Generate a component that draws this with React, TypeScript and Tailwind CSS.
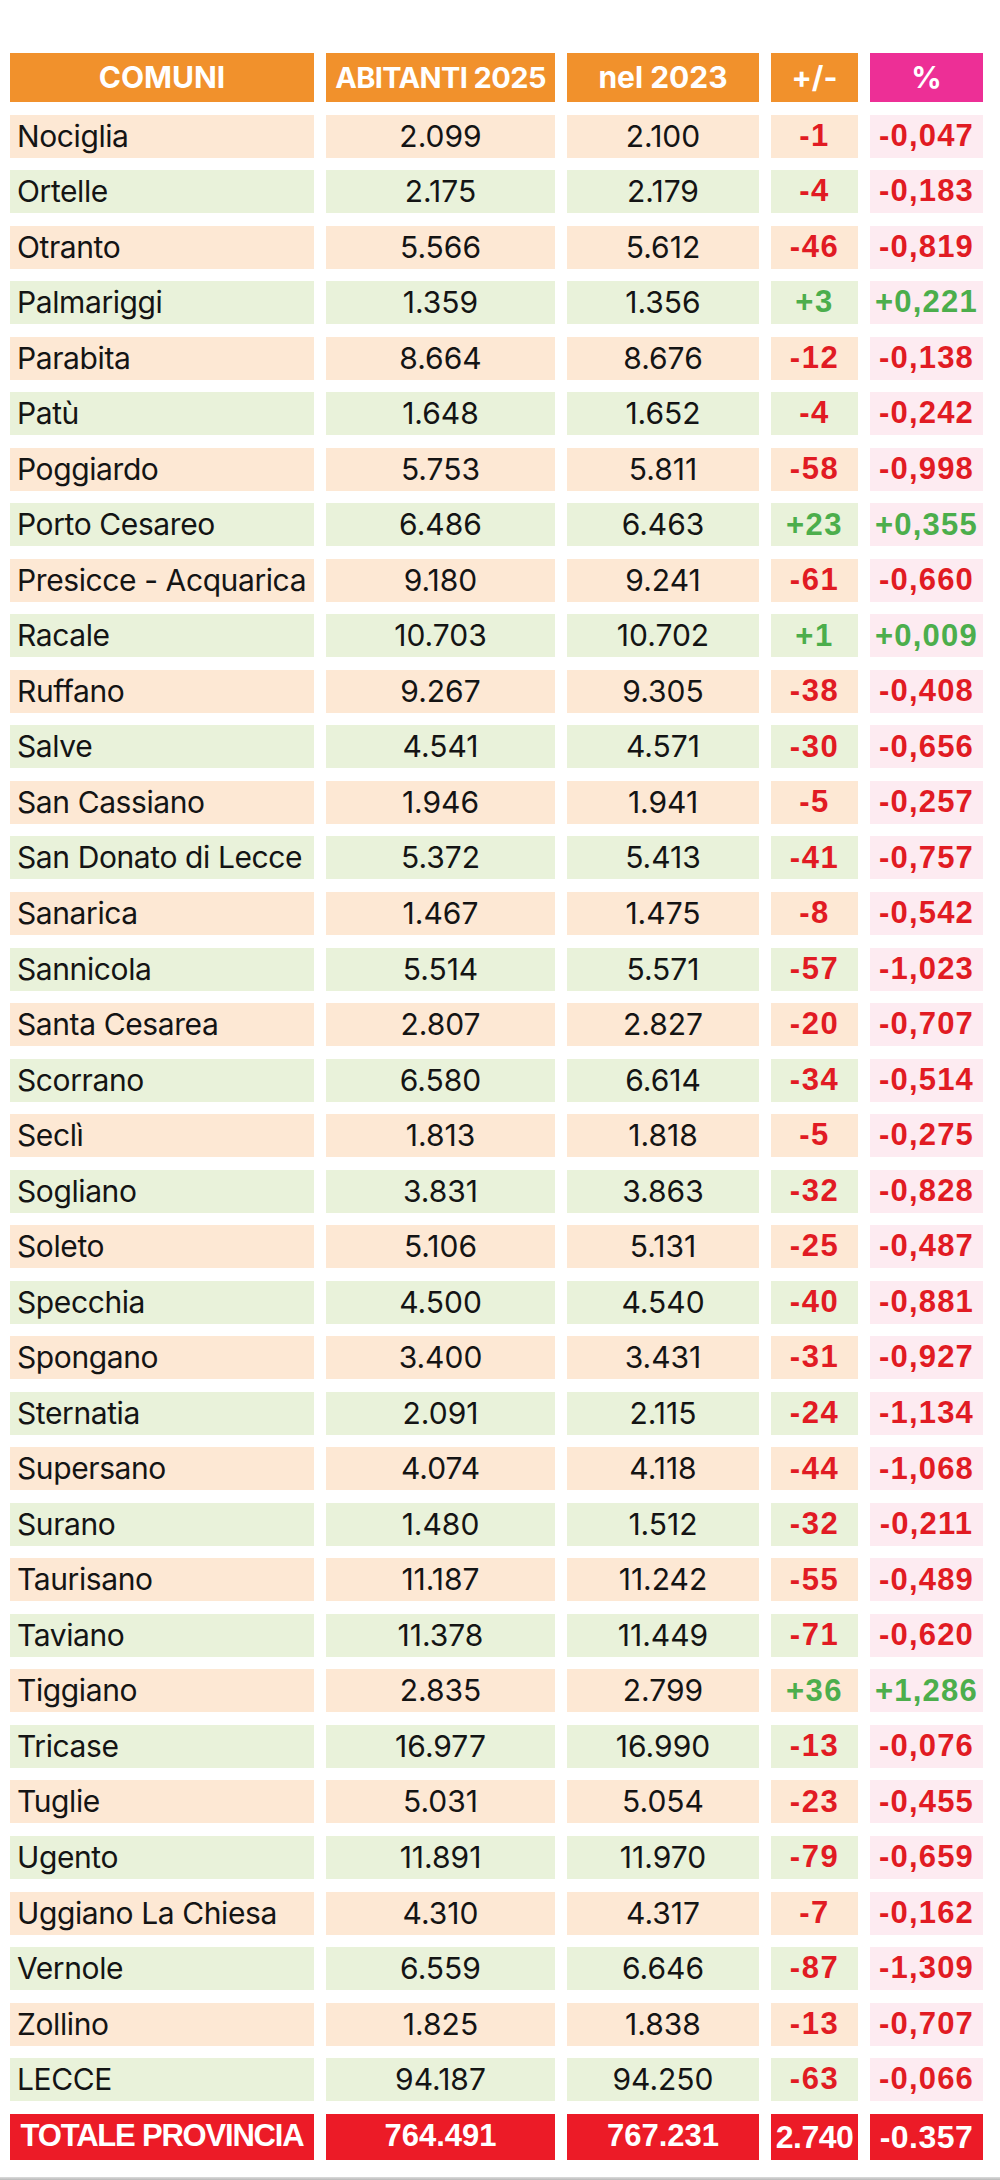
import React from "react";

type Row = [string, string, string, string, string];

const rows: Row[] = [
  ["Nociglia", "2.099", "2.100", "-1", "-0,047"],
  ["Ortelle", "2.175", "2.179", "-4", "-0,183"],
  ["Otranto", "5.566", "5.612", "-46", "-0,819"],
  ["Palmariggi", "1.359", "1.356", "+3", "+0,221"],
  ["Parabita", "8.664", "8.676", "-12", "-0,138"],
  ["Patù", "1.648", "1.652", "-4", "-0,242"],
  ["Poggiardo", "5.753", "5.811", "-58", "-0,998"],
  ["Porto Cesareo", "6.486", "6.463", "+23", "+0,355"],
  ["Presicce - Acquarica", "9.180", "9.241", "-61", "-0,660"],
  ["Racale", "10.703", "10.702", "+1", "+0,009"],
  ["Ruffano", "9.267", "9.305", "-38", "-0,408"],
  ["Salve", "4.541", "4.571", "-30", "-0,656"],
  ["San Cassiano", "1.946", "1.941", "-5", "-0,257"],
  ["San Donato di Lecce", "5.372", "5.413", "-41", "-0,757"],
  ["Sanarica", "1.467", "1.475", "-8", "-0,542"],
  ["Sannicola", "5.514", "5.571", "-57", "-1,023"],
  ["Santa Cesarea", "2.807", "2.827", "-20", "-0,707"],
  ["Scorrano", "6.580", "6.614", "-34", "-0,514"],
  ["Seclì", "1.813", "1.818", "-5", "-0,275"],
  ["Sogliano", "3.831", "3.863", "-32", "-0,828"],
  ["Soleto", "5.106", "5.131", "-25", "-0,487"],
  ["Specchia", "4.500", "4.540", "-40", "-0,881"],
  ["Spongano", "3.400", "3.431", "-31", "-0,927"],
  ["Sternatia", "2.091", "2.115", "-24", "-1,134"],
  ["Supersano", "4.074", "4.118", "-44", "-1,068"],
  ["Surano", "1.480", "1.512", "-32", "-0,211"],
  ["Taurisano", "11.187", "11.242", "-55", "-0,489"],
  ["Taviano", "11.378", "11.449", "-71", "-0,620"],
  ["Tiggiano", "2.835", "2.799", "+36", "+1,286"],
  ["Tricase", "16.977", "16.990", "-13", "-0,076"],
  ["Tuglie", "5.031", "5.054", "-23", "-0,455"],
  ["Ugento", "11.891", "11.970", "-79", "-0,659"],
  ["Uggiano La Chiesa", "4.310", "4.317", "-7", "-0,162"],
  ["Vernole", "6.559", "6.646", "-87", "-1,309"],
  ["Zollino", "1.825", "1.838", "-13", "-0,707"],
  ["LECCE", "94.187", "94.250", "-63", "-0,066"],
];

const inter = "font-['Inter','Liberation_Sans',sans-serif]";
const arial = "font-['Liberation_Sans','Arial',sans-serif]";

export default function App() {
  return (
    <div className="w-[1000px] h-[2180px] bg-white flex flex-col">
      <div className="pt-[53px] pl-[10px]">
        <div className="grid grid-cols-[304px_229px_192px_87px_113px] gap-x-[12px] gap-y-[12.54px]">
          {/* Header */}
          <div className={`h-[49px] bg-[#f1912c] text-white ${inter} font-bold text-[30px] flex items-center justify-center`}>
            COMUNI
          </div>
          <div className={`h-[49px] bg-[#f1912c] text-white ${inter} font-bold text-[29px] tracking-[-0.6px] flex items-center justify-center whitespace-nowrap`}>
            ABITANTI 2025
          </div>
          <div className={`h-[49px] bg-[#f1912c] text-white ${inter} font-bold text-[30px] flex items-center justify-center`}>
            nel 2023
          </div>
          <div className={`h-[49px] bg-[#f1912c] text-white ${inter} font-bold text-[30px] flex items-center justify-center`}>
            +/-
          </div>
          <div className={`h-[49px] bg-[#ed2f96] text-white ${inter} font-bold text-[30px] flex items-center justify-center`}>
            %
          </div>

          {rows.map((r, i) => {
            const bg = i % 2 === 0 ? "bg-[#fde8d4]" : "bg-[#e9f2da]";
            const pos = r[3].startsWith("+");
            const col = pos ? "text-[#4cae4c]" : "text-[#e11b23]";
            return (
              <React.Fragment key={r[0]}>
                <div className={`h-[43px] ${bg} ${inter} text-[30px] tracking-[-0.4px] text-[#141414] flex items-center pl-[7px] whitespace-nowrap`}>
                  {r[0]}
                </div>
                <div className={`h-[43px] ${bg} ${inter} text-[30px] text-[#141414] flex items-center justify-center`}>
                  {r[1]}
                </div>
                <div className={`h-[43px] ${bg} ${inter} text-[30px] text-[#141414] flex items-center justify-center`}>
                  {r[2]}
                </div>
                <div className={`h-[43px] ${bg} ${arial} font-bold ${col} text-[31px] tracking-[1.5px] flex items-center justify-center`}>
                  {r[3]}
                </div>
                <div className={`h-[43px] bg-[#fdebf1] ${arial} font-bold ${col} text-[31px] tracking-[1.2px] flex items-center justify-center whitespace-nowrap`}>
                  {r[4]}
                </div>
              </React.Fragment>
            );
          })}

          {/* Total */}
          <div className={`h-[46px] bg-[#ec1b27] text-white ${arial} font-bold text-[31px] tracking-[-1.2px] flex items-center justify-center whitespace-nowrap`}>
            TOTALE PROVINCIA
          </div>
          <div className={`h-[46px] bg-[#ec1b27] text-white ${arial} font-bold text-[31px] flex items-center justify-center`}>
            764.491
          </div>
          <div className={`h-[46px] bg-[#ec1b27] text-white ${arial} font-bold text-[31px] flex items-center justify-center`}>
            767.231
          </div>
          <div className={`h-[46px] bg-[#ec1b27] text-white ${arial} font-bold text-[32px] tracking-[-0.5px] flex items-center justify-center`}>
            2.740
          </div>
          <div className={`h-[46px] bg-[#ec1b27] text-white ${arial} font-bold text-[32px] tracking-[0.5px] flex items-center justify-center`}>
            -0.357
          </div>
        </div>
      </div>
      <div className="mt-auto h-[3px] bg-gradient-to-b from-[#dcdcdc] to-[#b8b8b8]" />
    </div>
  );
}
